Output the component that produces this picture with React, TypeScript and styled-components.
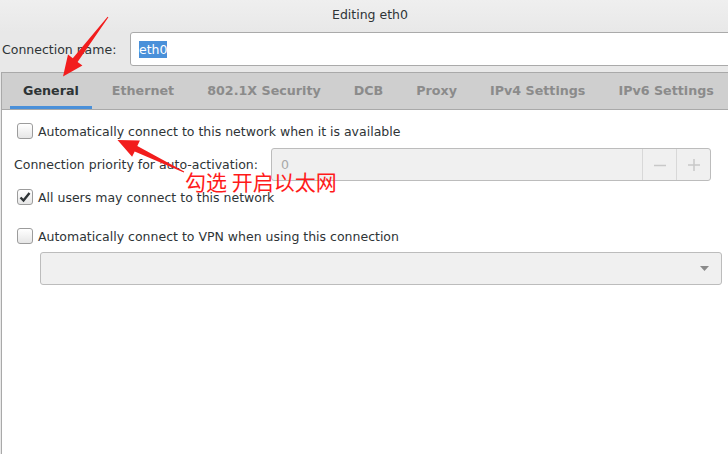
import React from "react";
import styled, { createGlobalStyle } from "styled-components";

const Global = createGlobalStyle`
  html, body { margin: 0; padding: 0; overflow: hidden; background: #e8e8e8; }
  body { font-family: "DejaVu Sans", "Noto Sans CJK SC", sans-serif; }
`;

const Window = styled.div`
  position: relative;
  width: 728px;
  height: 454px;
  overflow: hidden;
  display: flex;
  flex-direction: column;
  background: #e8e8e8;
  color: #2e3436;
  font-size: 12.5px;
`;

const TitleBar = styled.div`
  height: 32px;
  flex: none;
  display: flex;
  align-items: center;
  justify-content: center;
  padding-left: 12px;
  padding-bottom: 4px;
  box-sizing: border-box;
  background: linear-gradient(#efefef, #e8e8e8);
`;

const NameRow = styled.div`
  display: flex;
  align-items: center;
  height: 34px;
  flex: none;
  margin-bottom: 6px;
  margin-right: -6px;
`;

const Label = styled.label<{ $width?: number; $pad?: number }>`
  flex: none;
  width: ${(p) => (p.$width ? `${p.$width}px` : "auto")};
  padding-left: ${(p) => p.$pad ?? 0}px;
  box-sizing: border-box;
  white-space: nowrap;
`;

const Entry = styled.div`
  flex: 1;
  height: 34px;
  box-sizing: border-box;
  border: 1px solid #aaaaaa;
  border-radius: 3px;
  background: #ffffff;
  display: flex;
  align-items: center;
  padding-left: 8px;
`;

const Selected = styled.span`
  display: inline-block;
  height: 17px;
  line-height: 17px;
  background: #4a90d9;
  color: #ffffff;
`;

const Notebook = styled.div`
  flex: 1;
  display: flex;
  flex-direction: column;
  margin-left: 1px;
  margin-right: -6px;
  border-left: 1px solid #a9a9a9;
  border-top: 1px solid #a9a9a9;
  background: #ffffff;
`;

const TabBar = styled.div`
  height: 36px;
  flex: none;
  display: flex;
  gap: 7px;
  padding-left: 8px;
  background: #cfcfcf;
  border-bottom: 1px solid #a9a9a9;
`;

const Tab = styled.div<{ $active?: boolean }>`
  height: 36px;
  box-sizing: border-box;
  padding: 2px 13px 0;
  display: flex;
  align-items: center;
  font-weight: bold;
  font-size: 12.7px;
  color: ${(p) => (p.$active ? "#2e3436" : "#8b8b8b")};
  border-bottom: 3px solid ${(p) => (p.$active ? "#4a90d9" : "transparent")};
  white-space: nowrap;
`;

const Content = styled.div`
  flex: 1;
  display: flex;
  flex-direction: column;
  padding-top: 11px;
`;

const CheckRow = styled.div<{ $top?: number }>`
  display: flex;
  align-items: center;
  height: 20px;
  gap: 5px;
  padding-left: 15px;
  margin-top: ${(p) => p.$top ?? 0}px;
  white-space: nowrap;
`;

const Box = styled.span<{ $checked?: boolean }>`
  width: 16px;
  height: 16px;
  flex: none;
  box-sizing: border-box;
  border: 1px solid #9c9c9c;
  border-radius: 3px;
  background: linear-gradient(#ffffff, #e6e6e6);
  display: flex;
  align-items: center;
  justify-content: center;
`;

const PriorityRow = styled.div`
  display: flex;
  align-items: center;
  margin-top: 7px;
  margin-right: 23px;
  height: 33px;
`;

const Spin = styled.div`
  flex: 1;
  height: 33px;
  box-sizing: border-box;
  border: 1px solid #bcbcbc;
  border-radius: 3px;
  background: #f0f0f0;
  display: flex;
  align-items: stretch;
`;

const SpinValue = styled.div`
  flex: 1;
  display: flex;
  align-items: center;
  padding-left: 9px;
  color: #a8a8a8;
`;

const SpinButton = styled.div`
  width: 33px;
  flex: none;
  border-left: 1px solid #d8d8d8;
  display: flex;
  align-items: center;
  justify-content: center;
`;

const Combo = styled.div`
  margin: 6px 12px 0 38px;
  height: 33px;
  box-sizing: border-box;
  border: 1px solid #bcbcbc;
  border-radius: 3px;
  background: #f0f0f0;
  display: flex;
  align-items: center;
  justify-content: flex-end;
  padding-right: 12px;
`;

const Overlay = styled.svg`
  position: absolute;
  left: 0;
  top: 0;
  pointer-events: none;
`;

const Note = styled.div`
  position: absolute;
  left: 185px;
  top: 169px;
  font-family: "Noto Sans CJK SC", sans-serif;
  font-size: 21px;
  line-height: 24px;
  color: #ff1a1a;
  white-space: pre;
  pointer-events: none;
`;

const tabs = ["General", "Ethernet", "802.1X Security", "DCB", "Proxy", "IPv4 Settings", "IPv6 Settings"];

function Check({ checked }: { checked?: boolean }) {
  return (
    <Box $checked={checked}>
      {checked && (
        <svg width="12" height="12" viewBox="0 0 12 12">
          <path d="M1.5 6.5 L4.5 9.5 L10.5 2" fill="none" stroke="#2e3436" strokeWidth="2.4" strokeLinejoin="miter" />
        </svg>
      )}
    </Box>
  );
}

export default function App() {
  return (
    <>
      <Global />
      <Window>
        <TitleBar>Editing eth0</TitleBar>
        <NameRow>
          <Label $width={130} $pad={2}>Connection name:</Label>
          <Entry>
            <Selected>eth0</Selected>
          </Entry>
        </NameRow>
        <Notebook>
          <TabBar>
            {tabs.map((t, i) => (
              <Tab key={t} $active={i === 0}>{t}</Tab>
            ))}
          </TabBar>
          <Content>
            <CheckRow>
              <Check />
              <span>Automatically connect to this network when it is available</span>
            </CheckRow>
            <PriorityRow>
              <Label $width={269} $pad={12}>Connection priority for auto-activation:</Label>
              <Spin>
                <SpinValue>0</SpinValue>
                <SpinButton>
                  <svg width="12" height="12" viewBox="0 0 12 12">
                    <path d="M0 6.5 H12" stroke="#c8c8c8" strokeWidth="1.5" />
                  </svg>
                </SpinButton>
                <SpinButton>
                  <svg width="12" height="12" viewBox="0 0 12 12">
                    <path d="M0 6 H12 M6 0 V12" stroke="#c8c8c8" strokeWidth="1.5" />
                  </svg>
                </SpinButton>
              </Spin>
            </PriorityRow>
            <CheckRow $top={6}>
              <Check checked />
              <span>All users may connect to this network</span>
            </CheckRow>
            <CheckRow $top={19}>
              <Check />
              <span>Automatically connect to VPN when using this connection</span>
            </CheckRow>
            <Combo>
              <svg width="9" height="5" viewBox="0 0 9 5">
                <path d="M0 0 H9 L4.5 5 Z" fill="#8a8a8a" />
              </svg>
            </Combo>
          </Content>
        </Notebook>
        <Overlay width="728" height="454" viewBox="0 0 728 454">
          <polygon
            points="108.4,17.3 77.6,61.9 82.4,65.6 63,76.5 68,54.6 72.8,58.3 107.6,16.7"
            fill="#f21d1d"
          />
          <polygon
            points="184.2,171.6 137.3,146 139.9,140.6 117.5,140 132.1,156.8 134.7,151.4 183.8,172.4"
            fill="#f21d1d"
          />
        </Overlay>
        <Note>勾选 开启以太网</Note>
      </Window>
    </>
  );
}
